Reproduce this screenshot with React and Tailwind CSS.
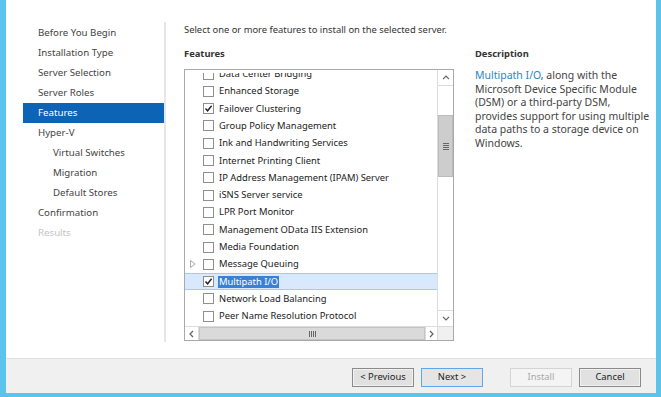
import React from 'react';

const navItems = [
  { label: 'Before You Begin' },
  { label: 'Installation Type' },
  { label: 'Server Selection' },
  { label: 'Server Roles' },
  { label: 'Features', active: true },
  { label: 'Hyper-V' },
  { label: 'Virtual Switches', sub: true },
  { label: 'Migration', sub: true },
  { label: 'Default Stores', sub: true },
  { label: 'Confirmation' },
  { label: 'Results', disabled: true },
];

const features = [
  { label: 'Data Center Bridging' },
  { label: 'Enhanced Storage' },
  { label: 'Failover Clustering', checked: true },
  { label: 'Group Policy Management' },
  { label: 'Ink and Handwriting Services' },
  { label: 'Internet Printing Client' },
  { label: 'IP Address Management (IPAM) Server' },
  { label: 'iSNS Server service' },
  { label: 'LPR Port Monitor' },
  { label: 'Management OData IIS Extension' },
  { label: 'Media Foundation' },
  { label: 'Message Queuing', expandable: true },
  { label: 'Multipath I/O', checked: true, selected: true },
  { label: 'Network Load Balancing' },
  { label: 'Peer Name Resolution Protocol' },
  { label: 'Quality Windows Audio Video Experience' },
];

const font = { fontFamily: '"Noto Sans", "Open Sans", sans-serif' };

const Checkbox = ({ checked }) => (
  <div className="w-[11px] h-[11px] border border-[#8e8f8f] bg-white flex items-center justify-center shrink-0">
    {checked && (
      <svg width="9" height="9" viewBox="0 0 9 9">
        <path d="M1.5 4.5 L3.6 6.8 L7.6 1.8" fill="none" stroke="#222" strokeWidth="1.4" />
      </svg>
    )}
  </div>
);

const FeatureRow = ({ item }) => (
  <div
    className={`h-[17.3px] flex items-center ${
      item.selected ? 'bg-[#dae8fc] border-y border-[#a6c9f2]' : ''
    }`}
  >
    <div className="w-[18px] flex justify-center shrink-0">
      {item.expandable && (
        <svg width="6" height="8" viewBox="0 0 6 8" className="ml-[-2px]">
          <path d="M0.5 0.5 L5 4 L0.5 7.5 Z" fill="white" stroke="#a8a8a8" />
        </svg>
      )}
    </div>
    <Checkbox checked={item.checked} />
    <span
      className={`ml-[4px] px-[1px] whitespace-nowrap text-[9.4px] leading-[12px] ${
        item.selected ? 'bg-[#3a80d6] text-white' : 'text-[#222]'
      }`}
    >
      {item.label}
    </span>
  </div>
);

const Button = ({ children, variant }) => {
  const styles = {
    default: 'border-[#8a8a8a] bg-[#e1e1e1] text-[#222] shadow-[inset_0_0_0_1px_#f2f2f2]',
    focus: 'border-[#5ea7ea] bg-[#e5e5e5] text-[#222]',
    disabled: 'border-[#d4d4d4] bg-[#f4f4f4] text-[#a8a8a8]',
  };
  return (
    <div
      className={`w-[62px] h-[19px] border flex items-center justify-center text-[9.4px] ${styles[variant || 'default']}`}
    >
      {children}
    </div>
  );
};

export default function App() {
  return (
    <div
      className="w-[661px] h-[397px] flex flex-col border-l-[6px] border-r-[5px] border-b-[4px] border-[#5cc3ea] bg-white overflow-hidden"
      style={font}
    >
      {/* Main area */}
      <div className="flex-1 flex">
        {/* Left nav */}
        <div className="ml-[17px] mt-[22px] w-[143px] h-[320px] border-r-2 border-[#e6e6e6] pt-[1px]">
          {navItems.map((item) => (
            <div
              key={item.label}
              className={`h-[20px] flex items-center text-[9.7px] ${item.sub ? 'pl-[30px]' : 'pl-[15px]'} ${
                item.active ? 'bg-[#0d63b5] text-white' : item.disabled ? 'text-[#c4c4c4]' : 'text-[#444]'
              }`}
            >
              {item.label}
            </div>
          ))}
        </div>

        {/* Content */}
        <div className="ml-[18px] pt-[23px] flex flex-col">
          <div className="h-[14px] leading-[14px] text-[9.4px] text-[#333] whitespace-nowrap">
            Select one or more features to install on the selected server.
          </div>
          <div className="flex mt-[10px]">
            {/* Features */}
            <div className="w-[270px] flex flex-col">
              <div className="h-[14px] leading-[14px] text-[9.4px] font-bold text-[#333]">Features</div>
              <div className="mt-[8px] h-[272px] border border-[#a9a9a9] flex flex-col bg-white">
                <div className="flex-1 flex min-h-0">
                  <div className="flex-1 pt-[3px] flex flex-col min-h-0">
                    <div className="flex-1 overflow-hidden">
                      <div className="-mt-[7.6px]">
                        {features.map((item) => (
                          <FeatureRow key={item.label} item={item} />
                        ))}
                      </div>
                    </div>
                  </div>
                  {/* Vertical scrollbar */}
                  <div className="w-[16px] border-l border-[#dcdcdc] bg-[#f0f0f0] flex flex-col">
                    <div className="h-[16px] bg-white border-b border-[#dcdcdc] flex items-center justify-center">
                      <svg width="8" height="5" viewBox="0 0 8 5">
                        <path d="M1 4.2 L4 1.2 L7 4.2" fill="none" stroke="#606060" strokeWidth="1.2" />
                      </svg>
                    </div>
                    <div className="h-[29px] bg-white"></div>
                    <div className="h-[62px] bg-[#cdcdcd] border border-[#bcbcbc] flex items-center justify-center">
                      <div className="flex flex-col gap-[1px]">
                        <div className="w-[6px] h-[1px] bg-[#666]"></div>
                        <div className="w-[6px] h-[1px] bg-[#666]"></div>
                        <div className="w-[6px] h-[1px] bg-[#666]"></div>
                        <div className="w-[6px] h-[1px] bg-[#666]"></div>
                      </div>
                    </div>
                    <div className="flex-1 bg-white"></div>
                    <div className="h-[16px] bg-white border-t border-[#dcdcdc] flex items-center justify-center">
                      <svg width="8" height="5" viewBox="0 0 8 5">
                        <path d="M1 0.8 L4 3.8 L7 0.8" fill="none" stroke="#606060" strokeWidth="1.2" />
                      </svg>
                    </div>
                  </div>
                </div>
                {/* Horizontal scrollbar */}
                <div className="h-[14px] flex border-t border-[#dcdcdc]">
                  <div className="w-[14px] bg-white border-r border-[#dcdcdc] flex items-center justify-center">
                    <svg width="5" height="8" viewBox="0 0 5 8">
                      <path d="M4 1 L1 4 L4 7" fill="none" stroke="#606060" strokeWidth="1.2" />
                    </svg>
                  </div>
                  <div className="flex-1 bg-[#dadada] border border-[#c4c4c4] flex items-center justify-center">
                    <div className="flex gap-[1px]">
                      <div className="w-[1px] h-[6px] bg-[#666]"></div>
                      <div className="w-[1px] h-[6px] bg-[#666]"></div>
                      <div className="w-[1px] h-[6px] bg-[#666]"></div>
                      <div className="w-[1px] h-[6px] bg-[#666]"></div>
                    </div>
                  </div>
                  <div className="w-[12px] bg-white border-l border-[#dcdcdc] flex items-center justify-center">
                    <svg width="5" height="8" viewBox="0 0 5 8">
                      <path d="M1 1 L4 4 L1 7" fill="none" stroke="#606060" strokeWidth="1.2" />
                    </svg>
                  </div>
                  <div className="w-[16px] bg-[#f0f0f0] border-l border-[#dcdcdc]"></div>
                </div>
              </div>
            </div>

            {/* Description */}
            <div className="ml-[21px] w-[176px] flex flex-col">
              <div className="h-[14px] leading-[14px] text-[9.4px] font-bold text-[#333]">Description</div>
              <p className="mt-[8px] text-[10.5px] leading-[13.6px] text-[#444]">
                <span className="text-[#2b87bd]">Multipath I/O</span>, along with the Microsoft Device Specific
                Module (DSM) or a third-party DSM, provides support for using multiple data paths to a storage
                device on Windows.
              </p>
            </div>
          </div>
        </div>
      </div>

      {/* Footer */}
      <div className="h-[35px] shrink-0 bg-[#f0f0f0] border-t border-[#e2e2e2] flex justify-end items-start pt-[9px] pr-[15px]">
        <Button>&lt; Previous</Button>
        <div className="ml-[7px]">
          <Button variant="focus">Next &gt;</Button>
        </div>
        <div className="ml-[27px]">
          <Button variant="disabled">Install</Button>
        </div>
        <div className="ml-[7px]">
          <Button>Cancel</Button>
        </div>
      </div>
    </div>
  );
}
